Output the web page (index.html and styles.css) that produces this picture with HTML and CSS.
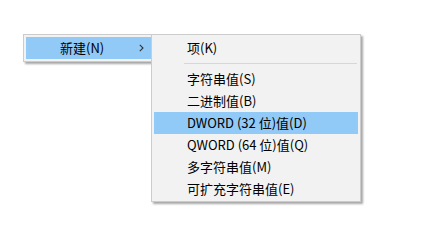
FILE: index.html
```html
<!DOCTYPE html>
<html lang="zh-CN">
<head>
  <meta charset="UTF-8" />
  <title>新建</title>
  <link rel="stylesheet" href="styles.css">
</head>
<body>
  <div class="desk">
    <!-- Parent context menu -->
    <div class="menu menu-main">
      <div class="item active has-sub">
        <span class="label">新建(N)</span>
        <svg class="arrow" width="5" height="8" viewBox="0 0 5 8">
          <path d="M0.8 0.8 L4 4 L0.8 7.2" fill="none" stroke="#333" stroke-width="1.1"/>
        </svg>
      </div>
    </div>

    <!-- Submenu "新建" -->
    <div class="menu menu-sub">
      <div class="item"><span class="label">项(K)</span></div>
      <div class="sep"></div>
      <div class="item"><span class="label">字符串值(S)</span></div>
      <div class="item"><span class="label">二进制值(B)</span></div>
      <div class="item active"><span class="label">DWORD (32 位)值(D)</span></div>
      <div class="item"><span class="label">QWORD (64 位)值(Q)</span></div>
      <div class="item"><span class="label">多字符串值(M)</span></div>
      <div class="item"><span class="label">可扩充字符串值(E)</span></div>
    </div>
  </div>
</body>
</html>
```

FILE: styles.css
```css
/* Basic reset */
* {
  margin: 0;
  padding: 0;
  box-sizing: border-box;
}

body {
  background-color: #fff;
  width: 422px;
  height: 242px;
  overflow: hidden;
  font-family: "Noto Sans CJK SC", sans-serif;
  font-size: 13px;
  color: #000;
}

.desk {
  position: relative;
  width: 422px;
  height: 242px;
}

/* Shared menu look (Windows 10 style) */
.menu {
  position: absolute;
  background-color: #f2f2f2;
  border: 1px solid #cccccc;
  padding: 2px;
  box-shadow: 2px 2px 2px rgba(0, 0, 0, 0.35);
}

.item {
  height: 22px;
  display: flex;
  align-items: center;
  padding-left: 33px;
  padding-bottom: 1px;
  white-space: nowrap;
}

.item.active {
  background-color: #91c9f7;
}

.menu-main {
  left: 23px;
  top: 34px;
  width: 132px;
}

.menu-main .item {
  padding-left: 34px;
  padding-right: 8px;
}

.arrow {
  margin-left: auto;
  margin-right: 0;
  margin-top: 1px;
}

.menu-sub {
  left: 151px;
  top: 34px;
  width: 210px;
  padding-bottom: 1px;
}

.sep {
  height: 1px;
  background-color: #d7d7d7;
  margin: 4px 1px 4px 30px;
}
```
